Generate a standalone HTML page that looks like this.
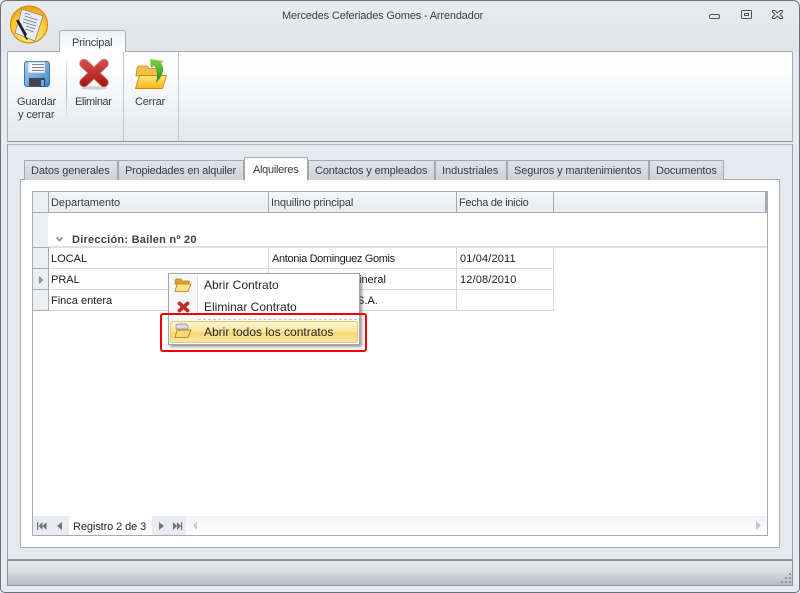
<!DOCTYPE html>
<html><head><meta charset="utf-8">
<style>
html,body{margin:0;padding:0;background:#fff}
#w{position:relative;width:800px;height:593px;overflow:hidden;font-family:"Liberation Sans",sans-serif;font-size:11px;color:#363b49;background:#e6e9ed}
#w div,#w svg{position:absolute}
.t{white-space:nowrap;line-height:14px}
.tab{top:160px;height:19px;background:linear-gradient(#e0e3e7,#cfd2d7);border:1px solid #a4a8b0;border-bottom:0;box-sizing:content-box}
.hc{top:192px;height:20px;background:linear-gradient(#f5f6f9,#e8ebf0);border-right:1px solid #a5a9b2}
.l{background:#d5d8dd}
.cell{color:#1c1c1c}
.m{font-size:12px;color:#22262e}
</style></head><body>
<div id="w">
<!-- window frame -->
<div style="left:0;top:0;width:798px;height:591px;border:1px solid #6b7178;border-radius:7px 7px 5px 5px;background:linear-gradient(#e9ebee 0,#e1e4e8 50px,#e6e9ed 52px)"></div>
<div class="t" style="left:282px;top:9px;letter-spacing:-.16px;color:#3a3f4c">Mercedes Ceferiades Gomes - Arrendador</div>
<!-- caption buttons -->
<svg style="left:700px;top:5px" width="90" height="20" fill="none" stroke="#4f555e" stroke-width="1"><rect x="9.500" y="9.500" width="10" height="4" rx="1.500"/><rect x="41.500" y="5.500" width="10" height="8" rx="1"/><rect x="44.500" y="8.500" width="4" height="2"/><path d="M72.500 5.500h2.500l2.500 2.500 2.500-2.500h2.500v1.500l-2.500 2.500 2.500 2.500v1.500h-2.500l-2.500-2.500-2.500 2.500h-2.500v-1.500l2.500-2.500-2.500-2.500z"/></svg>
<!-- app logo -->
<svg style="left:9px;top:5px" width="40" height="40" viewBox="0 0 40 40"><defs><radialGradient id="g" cx=".5" cy=".8" r=".8"><stop offset="0" stop-color="#ffee78"/><stop offset=".7" stop-color="#fbc52e"/><stop offset="1" stop-color="#f29c12"/></radialGradient></defs><circle cx="20" cy="19.500" r="18.500" fill="url(#g)" stroke="#e08a14" stroke-width="1.200"/><path d="M13 4 34 11 26 36 6 28z" fill="#e9ecf3" stroke="#7f8796" stroke-width=".8"/><path d="M16 8l5 1.500M15.500 11l13 4M14.500 14l13 4M14 17l13 4M17 21l9 3M16 24l9 3" stroke="#70788a" stroke-width=".8"/><path d="M7 15.500l2.500-1 8.500 15-2 2.500z" fill="#1e2025"/><path d="M15.500 31l3 3.500" stroke="#222" stroke-width="1.500"/></svg>
<!-- ribbon -->
<div style="left:7px;top:51px;width:784px;height:89px;border:1px solid #a7abb2;border-bottom:1px solid #8f9399;border-radius:2px 2px 0 0;background:linear-gradient(#fff 0,#fbfcfd 22px,#e5e8ec 85px)"></div>
<div style="left:59px;top:30px;width:67px;height:22px;border:1px solid #a9adb4;border-bottom:0;border-radius:3px 3px 0 0;background:linear-gradient(#eef0f3,#fff);box-sizing:border-box;"></div>
<div class="t" style="left:72px;top:36px;letter-spacing:-.2px">Principal</div>
<div style="left:60px;top:51px;width:65px;height:1px;background:#fff"></div>
<div style="left:123px;top:52px;width:1px;height:89px;background:#c4c7cc"></div>
<div style="left:178px;top:52px;width:1px;height:89px;background:#c4c7cc"></div>
<div style="left:66px;top:60px;width:1px;height:60px;background:linear-gradient(#eef0f3,#a9adb4,#eef0f3)"></div>
<!-- floppy -->
<svg style="left:22px;top:59px" width="30" height="30" viewBox="0 0 30 30"><defs><linearGradient id="fb" x1="0" y1="0" x2="1" y2="1"><stop offset="0" stop-color="#a8d2f2"/><stop offset="1" stop-color="#3f85cc"/></linearGradient></defs><rect x="2.500" y="2.500" width="25" height="25" rx="2.500" fill="url(#fb)" stroke="#3b76b5"/><rect x="6" y="3" width="17" height="11" fill="#f2f4f8" stroke="#9fb0c4" stroke-width=".6"/><path d="M10 5.500h12M10 8.500h12M10 11.500h12" stroke="#7d8794"/><rect x="7" y="19" width="16" height="8.500" fill="#3d4452"/><rect x="19" y="21" width="3" height="6" fill="#6fa8dc"/></svg>
<!-- X large -->
<svg style="left:77px;top:57px" width="34" height="34" viewBox="0 0 34 34"><defs><linearGradient id="xr" gradientUnits="userSpaceOnUse" x1="0" y1="2" x2="0" y2="30"><stop offset="0" stop-color="#d85050"/><stop offset="1" stop-color="#a81212"/></linearGradient></defs><ellipse cx="17" cy="31" rx="13" ry="1.800" fill="#cfd1d5"/><path d="M7 6.500 27 25.500M27 6.500 7 25.500" stroke="#c98a8a" stroke-width="9.500" stroke-linecap="round"/><path d="M7 6.500 27 25.500M27 6.500 7 25.500" stroke="url(#xr)" stroke-width="8" stroke-linecap="round"/></svg>
<!-- folder large with arrow -->
<svg style="left:134px;top:57px" width="34" height="34" viewBox="0 0 34 34"><defs><linearGradient id="fy" x1="0" y1="0" x2="0" y2="1"><stop offset="0" stop-color="#ffe97a"/><stop offset="1" stop-color="#f6b516"/></linearGradient><linearGradient id="ag" x1="0" y1="0" x2="0" y2="1"><stop offset="0" stop-color="#7fd43c"/><stop offset="1" stop-color="#1f8a1e"/></linearGradient></defs><path d="M2 19 3 11l1.500-2h8.500l2 2.500h13V19z" fill="#eec04a" stroke="#c08a18" stroke-width=".8"/><path d="M1.500 31.500 5.500 18.500H32.500L28.500 31.500z" fill="url(#fy)" stroke="#d08a14" stroke-width=".9"/><path d="M16 2 17 11 20 8.500C23 12 24 19 22 26 27 21 32 13 27 6L30 4z" fill="url(#ag)"/></svg>
<div class="t" style="left:17px;top:95px;letter-spacing:-.2px">Guardar</div>
<div class="t" style="left:18px;top:108px;letter-spacing:-.1px">y cerrar</div>
<div class="t" style="left:75px;top:95px;letter-spacing:-.4px">Eliminar</div>
<div class="t" style="left:135px;top:95px;letter-spacing:-.2px">Cerrar</div>
<!-- main panel -->
<div style="left:7px;top:144px;width:784px;height:414px;border:1px solid #9ea2a8;border-top-color:#b4b8be;border-bottom:1px solid #8e9298;background:#e6e9ed"></div>
<!-- page -->
<div style="left:20px;top:179px;width:758px;height:367px;border:1px solid #a6aab2;background:#fff"></div>
<!-- tabs -->
<div class="tab" style="left:24px;width:92px"></div>
<div class="tab" style="left:118px;width:124px"></div>
<div class="tab" style="left:308px;width:125px"></div>
<div class="tab" style="left:435px;width:70px"></div>
<div class="tab" style="left:507px;width:140px"></div>
<div class="tab" style="left:649px;width:73px"></div>
<div style="left:244px;top:157px;width:62px;height:23px;background:#fff;border:1px solid #a6aab2;border-bottom:0;border-radius:2px 2px 0 0"></div>
<div class="t" style="left:31px;top:164px;letter-spacing:-.1px">Datos generales</div>
<div class="t" style="left:125px;top:164px;letter-spacing:-.2px">Propiedades en alquiler</div>
<div class="t" style="left:253px;top:163px;letter-spacing:-.3px">Alquileres</div>
<div class="t" style="left:315px;top:164px;letter-spacing:-.13px">Contactos y empleados</div>
<div class="t" style="left:442px;top:164px">Industriales</div>
<div class="t" style="left:514px;top:164px;letter-spacing:-.12px">Seguros y mantenimientos</div>
<div class="t" style="left:656px;top:164px;letter-spacing:-.1px">Documentos</div>
<!-- grid -->
<div style="left:32px;top:191px;width:734px;height:343px;border:1px solid #a6aab2;background:#fff"></div>
<div class="hc" style="left:33px;width:15px;background:#eceef2"></div>
<div class="hc" style="left:49px;width:219px"></div>
<div class="hc" style="left:269px;width:187px"></div>
<div class="hc" style="left:457px;width:96px"></div>
<div class="hc" style="left:554px;width:211px;border-right:0"></div>
<div style="left:765px;top:192px;width:2px;height:20px;background:#a6aab2"></div>
<div style="left:33px;top:212px;width:734px;height:1px;background:#a6aab2"></div>
<div class="t" style="left:51px;top:196px;letter-spacing:-.05px">Departamento</div>
<div class="t" style="left:271px;top:196px;letter-spacing:-.15px">Inquilino principal</div>
<div class="t" style="left:459px;top:196px;letter-spacing:-.3px">Fecha de inicio</div>
<!-- indicator column -->
<div style="left:33px;top:213px;width:15px;height:97px;background:#eceef2"></div>
<div style="left:48px;top:247px;width:1px;height:63px;background:#a6aab2"></div>
<div style="left:33px;top:310px;width:16px;height:1px;background:#a6aab2"></div>
<div style="left:33px;top:268px;width:15px;height:1px;background:#a6aab2"></div>
<div style="left:33px;top:289px;width:15px;height:1px;background:#a6aab2"></div>
<div style="left:33px;top:247px;width:15px;height:1px;background:#a6aab2"></div>
<!-- group -->
<svg style="left:55px;top:236px" width="10" height="8" fill="none" stroke="#8f949c" stroke-width="1.800"><path d="M1.500 1.500 4.500 4.500 7.500 1.500"/></svg>
<div class="t" style="left:72px;top:233px;font-weight:bold;letter-spacing:.25px;color:#3c4150">Dirección: Bailen nº 20</div>
<div style="left:49px;top:246px;width:718px;height:2px;background:#dcdfe3"></div>
<!-- rows -->
<div class="l" style="left:49px;top:268px;width:505px;height:1px"></div>
<div class="l" style="left:49px;top:289px;width:505px;height:1px"></div>
<div class="l" style="left:49px;top:310px;width:505px;height:1px"></div>
<div class="l" style="left:268px;top:248px;width:1px;height:62px"></div>
<div class="l" style="left:456px;top:248px;width:1px;height:62px"></div>
<div class="l" style="left:553px;top:248px;width:1px;height:62px"></div>
<svg style="left:39px;top:276px" width="5" height="8"><path d="M0 0 4.500 4 0 8z" fill="#8c9098"/></svg>
<div class="t cell" style="left:51px;top:252px">LOCAL</div>
<div class="t cell" style="left:51px;top:273px">PRAL</div>
<div class="t cell" style="left:51px;top:294px">Finca entera</div>
<div class="t cell" style="left:272px;top:252px;letter-spacing:-.35px">Antonia Dominguez Gomis</div>
<div class="t cell" style="left:359px;top:273px">ineral</div>
<div class="t cell" style="left:357px;top:294px">S.A.</div>
<div class="t cell" style="left:460px;top:252px;letter-spacing:.15px">01/04/2011</div>
<div class="t cell" style="left:460px;top:273px;letter-spacing:.15px">12/08/2010</div>
<!-- navigator -->
<div style="left:33px;top:516px;width:734px;height:19px;background:linear-gradient(#f1f2f4,#fff)"></div>
<div style="left:33px;top:516px;width:36px;height:19px;background:#e9ecf0"></div>
<div style="left:152px;top:516px;width:34px;height:19px;background:#e9ecf0"></div>
<div style="left:69px;top:516px;width:83px;height:19px;background:#fff"></div>
<div class="t" style="left:73px;top:520px;color:#20242c;letter-spacing:-.1px">Registro 2 de 3</div>
<svg style="left:33px;top:516px" width="160" height="19" fill="#6f747c"><path d="M4 6h1.200v8H4zM9.500 6v8L5.500 10zM13.500 6v8L9.500 10zM29 6v8L24 10zM126 6v8l5-4zM140 6v8l4-4zM144 6v8l4-4zM148 6h1.200v8H148z"/></svg>
<svg style="left:190px;top:519px" width="10" height="13"><path d="M7 2v9L3 6.500z" fill="#c9ccd1"/></svg>
<svg style="left:754px;top:519px" width="10" height="13"><path d="M2 2v9l5-4.500z" fill="#c4c7cc"/></svg>
<!-- status bar -->
<div style="left:7px;top:560px;width:786px;height:26px;background:linear-gradient(#e7e9ec,#dcdee2 40%,#b9bcc1);border:1px solid #8f9399;box-sizing:border-box"></div>
<svg style="left:778px;top:570px" width="14" height="14" fill="#8f939a"><path d="M11 3h2v2h-2zM7 7h2v2H7zM11 7h2v2h-2zM3 11h2v2H3zM7 11h2v2H7zM11 11h2v2h-2z"/></svg>
<!-- context menu -->
<div style="left:168px;top:273px;width:190px;height:70px;background:#fff;border:1px solid #a2a5ab;box-shadow:2px 2px 3px rgba(70,70,70,.55)"></div>
<div style="left:169px;top:274px;width:28px;height:70px;background:#f7f7f8;border-right:1px solid #e2e4e7"></div>
<svg style="left:174px;top:278px" width="18" height="15" viewBox="0 0 18 15"><path d="M1 3l1-2h5l1 2h7v3H1z" fill="#d9a52e" stroke="#b07c12" stroke-width=".7"/><path d="M1 13.500 3 6h14l-3 7.500z" fill="#fde08a" stroke="#b8811a" stroke-width=".8"/></svg>
<svg style="left:176px;top:300px" width="15" height="14" viewBox="0 0 15 14"><path d="M3.500 3.500 11.500 10.500M11.500 3.500 3.500 10.500" stroke="#c42c2c" stroke-width="3.800" stroke-linecap="round"/></svg>
<div class="t m" style="left:204px;top:278px">Abrir Contrato</div>
<div class="t m" style="left:204px;top:300px">Eliminar Contrato</div>
<div style="left:198px;top:319px;width:159px;border-top:1px dashed #c3c5c9;height:0"></div>
<div style="left:170px;top:321px;width:186px;height:20px;border:1px solid #e5c874;border-radius:2px;background:linear-gradient(#fdf3cf,#fbe69c 48%,#f6d770 55%,#fbe7a8)"></div>
<svg style="left:174px;top:323px" width="18" height="16" viewBox="0 0 18 16"><path d="M2 2l2-1h8l2 2v3H2z" fill="#d9dbde" stroke="#8a8d92" stroke-width=".7"/><path d="M1 14.500 3 7h14l-3 7.500z" fill="#fcd775" stroke="#a67616" stroke-width=".8"/></svg>
<div class="t m" style="left:204px;top:325px">Abrir todos los contratos</div>
<!-- red highlight rect -->
<div style="left:160px;top:313px;width:203px;height:35px;border:2px solid #f00000;border-radius:3px"></div>
</div>
</body></html>
